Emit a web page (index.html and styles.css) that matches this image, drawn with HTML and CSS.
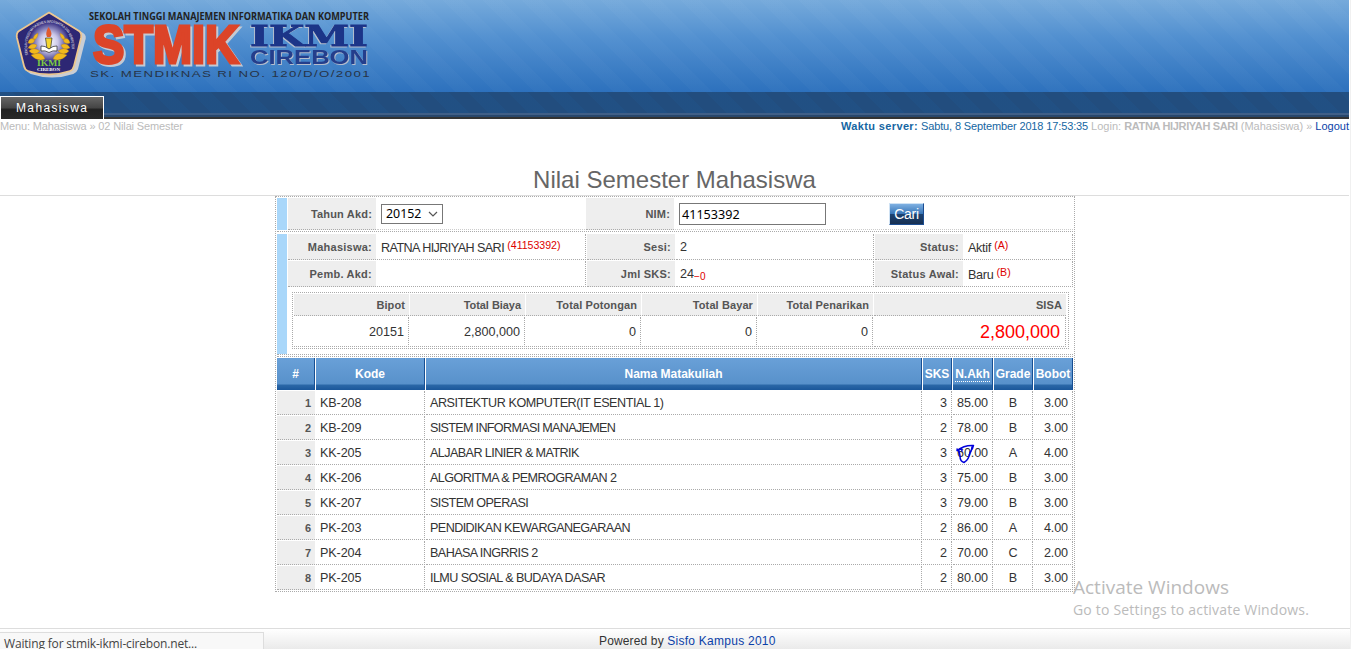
FILE: index.html
```
<!DOCTYPE html>
<html lang="id">
<head>
<meta charset="utf-8">
<title>Nilai Semester Mahasiswa</title>
<link rel="stylesheet" href="styles.css">
</head>
<body>
<div class="page">
  <header class="banner">
    <svg class="logo" width="380" height="92" viewBox="0 0 380 92">
      <defs>
        <radialGradient id="glow"><stop offset="0" stop-color="#fff"/><stop offset=".45" stop-color="#c9c6e8"/><stop offset="1" stop-color="#342c80"/></radialGradient>
        <path id="arc" d="M28 55C19 12 79 12 71 55"/>
        <g id="leaves"><path d="M38 33Q33 35 33 40Q38 39 38 33ZM35 39Q29 37 28 43Q34 45 35 39ZM37 45Q31 42 28 48Q35 51 37 45ZM40 51Q33 46 29 51Q34 57 40 51ZM45 59Q42 50 31 55Q37 62 45 59Z"/></g>
      </defs>
      <path d="M51 14L83 34Q86 36 84 41L77 69Q76 72 73 73Q52 80 31 73Q28 72 27 69L20 38Q20 35 23 33Z" fill="#c9cdd4" stroke="#c9cdd4" stroke-width="2"/>
      <path d="M49 12.500L79 31Q82 33 81 38L74 66Q73 70 70 71Q49 78 28 71Q25 70 24 66L17 38Q16 33 19 31Z" fill="#2d2774" stroke="#edc78f" stroke-width="1.8"/>
      <circle cx="49" cy="42" r="20" fill="url(#glow)"/>
      <text class="crest-arc"><textPath href="#arc" textLength="84" lengthAdjust="spacingAndGlyphs">SEKOLAH TINGGI MANAJEMEN INFORMATIKA DAN KOMPUTER</textPath></text>
      <g fill="#f1b81d" stroke="#a87417" stroke-width=".3"><use href="#leaves"/><use href="#leaves" transform="translate(98 0) scale(-1 1)"/></g>
      <path d="M45.500 38h6.500l-1.500 11h-3.500z" fill="#f4d530" stroke="#333" stroke-width=".7"/>
      <path d="M48.500 27Q53 33 50.500 37H47Q45 33 48.500 27Z" fill="#df5a30"/>
      <path d="M41 46Q45 45.500 49 49Q53 45.500 57 46V51Q53 50 49 52.500Q45 50 41 51Z" fill="#fff" stroke="#222" stroke-width=".7"/>
      <text class="crest-ikmi" x="37" y="65.500" textLength="24" lengthAdjust="spacingAndGlyphs">IKMI</text>
      <text class="crest-city" x="37" y="70.500" textLength="23" lengthAdjust="spacingAndGlyphs">CIREBON</text>
      <text class="school" x="89" y="20" textLength="280" lengthAdjust="spacingAndGlyphs">SEKOLAH TINGGI MANAJEMEN INFORMATIKA DAN KOMPUTER</text>
      <text class="stmik" x="93" y="63" textLength="146" lengthAdjust="spacingAndGlyphs">STMIK</text>
      <text class="ikmi" x="250" y="46" textLength="118" lengthAdjust="spacingAndGlyphs">IKMI</text>
      <text class="city" x="250" y="64" textLength="118" lengthAdjust="spacingAndGlyphs">CIREBON</text>
      <text class="sk" x="90" y="77" textLength="281" lengthAdjust="spacingAndGlyphs">SK. MENDIKNAS RI NO. 120/D/O/2001</text>
    </svg>
  </header>
  <nav class="menu"><a class="menu-item">Mahasiswa</a></nav>
  <div class="status-line">
    <span class="crumb">Menu: Mahasiswa » 02 Nilai Semester</span>
    <span class="session"><span class="clock"><b>Waktu server:</b> Sabtu, 8 September 2018 17:53:35</span> Login: <b class="user">RATNA HIJRIYAH SARI</b> (Mahasiswa) » <a class="link">Logout</a></span>
  </div>
  <h1 class="title">Nilai Semester Mahasiswa</h1>

  <main class="sheet">
    <section class="search">
      <div class="bar"></div>
      <div class="label">Tahun Akd:</div>
      <div class="field"><span class="select">20152<svg width="10" height="6" viewBox="0 0 10 6"><path d="M1 1l4 4 4-4" fill="none" stroke="#555" stroke-width="1.2"/></svg></span></div>
      <div class="label">NIM:</div>
      <div class="field"><span class="input">41153392</span></div>
      <div class="field"><span class="button">Cari</span></div>
    </section>
    <section class="info">
      <div class="bar"></div>
      <div class="info-body">
        <div class="facts">
          <div class="label">Mahasiswa:</div><div class="fact name"><span class="tight">RATNA HIJRIYAH SARI</span> <sup>(41153392)</sup></div>
          <div class="label">Sesi:</div><div class="fact">2</div>
          <div class="label">Status:</div><div class="fact name">Aktif <sup>(A)</sup></div>
          <div class="label">Pemb. Akd:</div><div class="fact"></div>
          <div class="label">Jml SKS:</div><div class="fact">24<sub>−0</sub></div>
          <div class="label">Status Awal:</div><div class="fact name">Baru <sup>(B)</sup></div>
        </div>
        <div class="money">
          <div class="mh">Bipot</div><div class="mh">Total Biaya</div><div class="mh">Total Potongan</div><div class="mh">Total Bayar</div><div class="mh">Total Penarikan</div><div class="mh">SISA</div>
          <div class="mv">20151</div><div class="mv">2,800,000</div><div class="mv">0</div><div class="mv">0</div><div class="mv">0</div><div class="mv rest">2,800,000</div>
        </div>
      </div>
    </section>
    <section class="grades">
      <div class="gh">#</div><div class="gh">Kode</div><div class="gh">Nama Matakuliah</div><div class="gh">SKS</div><div class="gh"><span class="abbr">N.Akh</span></div><div class="gh">Grade</div><div class="gh">Bobot</div>
      <div class="no">1</div><div class="c">KB-208</div><div class="c course wide">ARSITEKTUR KOMPUTER(IT ESENTIAL 1)</div><div class="c r">3</div><div class="c r">85.00</div><div class="c m">B</div><div class="c r">3.00</div>
      <div class="no">2</div><div class="c">KB-209</div><div class="c course narrow">SISTEM INFORMASI MANAJEMEN</div><div class="c r">2</div><div class="c r">78.00</div><div class="c m">B</div><div class="c r">3.00</div>
      <div class="no">3</div><div class="c">KK-205</div><div class="c course">ALJABAR LINIER &amp; MATRIK</div><div class="c r">3</div><div class="c r marked">60.00<svg class="ink" width="20" height="22" viewBox="0 0 20 22"><path d="M1 7.500Q8 2 17.500 2.500Q17 6 14 9Q13 17 8 19.500Q4 18.500 4 13L3 8M2 7Q6 5 6 8M1 6L3 9M13 12Q16 8 16 4" fill="none" stroke="#0000dc" stroke-width="1.500" stroke-linecap="round" stroke-linejoin="round"/></svg></div><div class="c m">A</div><div class="c r">4.00</div>
      <div class="no">4</div><div class="c">KK-206</div><div class="c course">ALGORITMA &amp; PEMROGRAMAN 2</div><div class="c r">3</div><div class="c r">75.00</div><div class="c m">B</div><div class="c r">3.00</div>
      <div class="no">5</div><div class="c">KK-207</div><div class="c course">SISTEM OPERASI</div><div class="c r">3</div><div class="c r">79.00</div><div class="c m">B</div><div class="c r">3.00</div>
      <div class="no">6</div><div class="c">PK-203</div><div class="c course">PENDIDIKAN KEWARGANEGARAAN</div><div class="c r">2</div><div class="c r">86.00</div><div class="c m">A</div><div class="c r">4.00</div>
      <div class="no">7</div><div class="c">PK-204</div><div class="c course">BAHASA INGRRIS 2</div><div class="c r">2</div><div class="c r">70.00</div><div class="c m">C</div><div class="c r">2.00</div>
      <div class="no">8</div><div class="c">PK-205</div><div class="c course">ILMU SOSIAL &amp; BUDAYA DASAR</div><div class="c r">2</div><div class="c r">80.00</div><div class="c m">B</div><div class="c r">3.00</div>
    </section>
  </main>
  <footer class="footer">Powered by <a class="link">Sisfo Kampus 2010</a></footer>
</div>
<div class="watermark"><div class="wm-title">Activate Windows</div><div class="wm-text">Go to Settings to activate Windows.</div></div>
<div class="loading">Waiting for stmik-ikmi-cirebon.net...</div>
</body>
</html>
```
FILE: styles.css
```
* { box-sizing: border-box; }
body { margin: 0; height: 649px; overflow: hidden; background: #f0f0f0; font-family: "Liberation Sans", Arial, sans-serif; font-size: 12.6px; color: #333; }
.page { width: 1350px; height: 649px; background: #fff; display: flex; flex-direction: column; }
.banner { height: 92px; width: 1349px; background: repeating-linear-gradient(45deg, rgba(255,255,255,0) 0 14px, rgba(255,255,255,.018) 14px 28px), linear-gradient(#76aadb, #5290d0 40%, #2d71bd); }
.logo { display: block; }
.logo text { font-family: "Liberation Sans", Arial, sans-serif; }
.logo .crest-arc { font-size: 3.6px; fill: #fff; }
.logo .crest-ikmi { font: bold 8px "Liberation Serif", serif; fill: #7dcb42; }
.logo .crest-city { font: bold 4.8px "Liberation Serif", serif; fill: #fff; }
.logo .school { font-family: "Open Sans", sans-serif; font-size: 10px; font-weight: bold; fill: #222; }
.logo .stmik { font-size: 53px; font-weight: bold; fill: #dc4428; stroke: #dc4428; stroke-width: 3; filter: drop-shadow(2px 2px 0 #c4cad3); }
.logo .ikmi { font: bold 27px "DejaVu Serif", serif; fill: #1c3588; stroke: #1c3588; stroke-width: .8; filter: drop-shadow(-1px 1px 0 #b5bdcc); }
.logo .city { font-size: 19.5px; font-weight: bold; fill: #243e8c; filter: drop-shadow(1px 1px 0 #b5bdcc); }
.logo .sk { font-size: 9.4px; fill: #273447; letter-spacing: 1px; }
.menu { height: 27px; width: 1349px; padding-top: 4px; background: linear-gradient(transparent 0 21px, #405f87 21px 23px, #28476c 23px 25px, #333 25px 27px), repeating-linear-gradient(45deg, rgba(255,255,255,0) 0 14px, rgba(30,90,150,.22) 14px 28px), #224d7e; }
.menu-item { display: block; width: 104px; height: 23px; border: 1px solid #fff; border-bottom: 0; background: linear-gradient(#666, #444 50%, #222 55%, #292929); color: #fff; font-size: 12px; letter-spacing: 1.36px; line-height: 22px; padding-left: 15px; }
.status-line { height: 16px; width: 1349px; display: flex; justify-content: space-between; font-size: 11px; line-height: 15px; color: #bbb; white-space: nowrap; }
.crumb { letter-spacing: -.14px; }
.session { letter-spacing: 0; }
.clock { color: #1566a2; letter-spacing: -.13px; }
.clock b { letter-spacing: .36px; }
.user { letter-spacing: -.34px; }
.link { color: #0b3fa8; }
.title { margin: 30px 0 0; height: 31px; width: 1349px; text-align: center; font-size: 24px; line-height: 30px; font-weight: normal; color: #666; border-bottom: 1px solid #ddd; }
.sheet { margin-left: 275px; width: 800px; height: 396px; border: 1px dotted #aaa; padding: 0 1px; }
.label { background: #eee; border-bottom: 1px dotted #aaa; color: #555; font-size: 11px; font-weight: bold; letter-spacing: .18px; display: flex; align-items: center; justify-content: flex-end; padding-right: 4px; }
.facts .label { letter-spacing: .24px; }
.bar { background: #a9d7fa; }
.search { display: grid; grid-template-columns: 10px 88px 208px 88px 209px 1fr; column-gap: 1px; padding-top: 1px; height: 34px; }
.search .bar { height: 32px; }
.search .label { height: 32px; }
.search .field { height: 32px; border-bottom: 1px dotted #ccc; display: flex; align-items: center; padding-left: 4px; }
.select { width: 62px; height: 20px; border: 1px solid #777; display: flex; align-items: center; justify-content: space-between; padding: 0 4px; font: 12.4px "Noto Sans", sans-serif; color: #000; }
.input { width: 147px; height: 22px; border: 1px solid #777; padding-left: 2px; line-height: 22px; font-family: "Noto Sans", sans-serif; font-size: 12.6px; color: #000; }
.button { width: 35px; height: 22px; border: 1px solid #cfe2f4; border-right-color: #1c4d91; border-bottom-color: #1c4d91; background: linear-gradient(#7eb0e2, #3674b6 50%, #1c4372 52%, #172f51); color: #fff; font-size: 14px; letter-spacing: -.3px; line-height: 21px; text-align: center; }
.info { display: flex; gap: 1px; height: 124px; border: 1px dotted #aaa; border-width: 1px 0; padding: 2px 0 0; }
.info .bar { width: 10px; height: 120px; }
.info-body { width: 785px; }
.facts { display: grid; grid-template-columns: 88px 209px 88px 198px 88px 109px; grid-template-rows: 26px 26px; gap: 1px; }
.fact { border: 1px dotted #aaa; border-width: 0 1px 1px 0; padding-left: 4px; line-height: 26px; height: 26px; white-space: nowrap; }
.name { letter-spacing: -.3px; line-height: 28px; }
.tight { letter-spacing: -.57px; }
.fact sup, .fact sub { color: #d00; font-size: 10px; line-height: 0; letter-spacing: .2px; }
.fact sup { font-size: 10.6px; letter-spacing: -.02px; vertical-align: 3px; }
.fact sub { vertical-align: -2px; }
.money { margin: 5px 0 0 4px; width: 777px; height: 57px; border: 1px dotted #aaa; padding: 1px; display: grid; grid-template-columns: repeat(5, 115px) 192px; grid-template-rows: 22px 30px; gap: 1px; }
.mh { background: #eee; border-bottom: 1px dotted #aaa; color: #555; font-size: 11px; font-weight: bold; letter-spacing: .1px; line-height: 22px; text-align: right; padding-right: 4px; }
.mh:nth-child(2) { letter-spacing: -.05px; }
.mv { border: 1px dotted #aaa; border-width: 0 1px 1px 0; text-align: right; line-height: 30px; padding-right: 4px; }
.rest { color: #f00; font-size: 18px; padding-right: 5px; }
.grades { display: grid; grid-template-columns: 38px 109px 496px 29px 40px 39px 39px; grid-template-rows: 32px repeat(8, 24px); gap: 1px; border-top: 1px dotted #aaa; padding-top: 1px; margin-top: 1px; }
.gh { color: #fff; font-size: 12px; font-weight: bold; line-height: 32px; text-align: center; white-space: nowrap; border-right: 1px solid #174f93; background: linear-gradient(#69a0d8, #5891cb 26px, #2b68a7 27px, #1b579b); }
.abbr { border-bottom: 1px dotted #fff; }
.no { background: #eee; border-bottom: 1px dotted #aaa; font-size: 11px; font-weight: bold; color: #555; text-align: right; padding-right: 4px; line-height: 24px; }
.c { border: 1px dotted #aaa; border-width: 0 1px 1px 0; padding-left: 4px; line-height: 25px; height: 24px; white-space: nowrap; letter-spacing: -.1px; }
.course { letter-spacing: -.58px; }
.wide { letter-spacing: -.44px; }
.narrow { letter-spacing: -.68px; }
.r { text-align: right; padding: 0 4px 0 0; }
.m { text-align: center; padding: 0; }
.marked { position: relative; }
.ink { position: absolute; left: 3px; top: 2px; }
.footer { margin-top: 36px; height: 21px; width: 1350px; border-top: 1px solid #ddd; background: linear-gradient(#fff, #eaeaea); padding: 4px 0 0 599px; font-size: 12px; line-height: 16px; letter-spacing: .14px; }
.footer .link { letter-spacing: .26px; }
.watermark { position: absolute; left: 1073px; top: 575px; color: #bbb; font-family: "Open Sans", "Noto Sans", sans-serif; white-space: nowrap; }
.wm-title { font-size: 19px; line-height: 24px; }
.wm-text { font-size: 14px; line-height: 22px; letter-spacing: .19px; }
.loading { position: absolute; left: 0; top: 632px; width: 264px; height: 17px; overflow: hidden; border: 1px solid #ddd; border-width: 1px 1px 0 0; background: #f8f8f8; padding-left: 4px; font: 12px/22px "Open Sans", "Noto Sans", sans-serif; letter-spacing: -.17px; color: #444; }
```
